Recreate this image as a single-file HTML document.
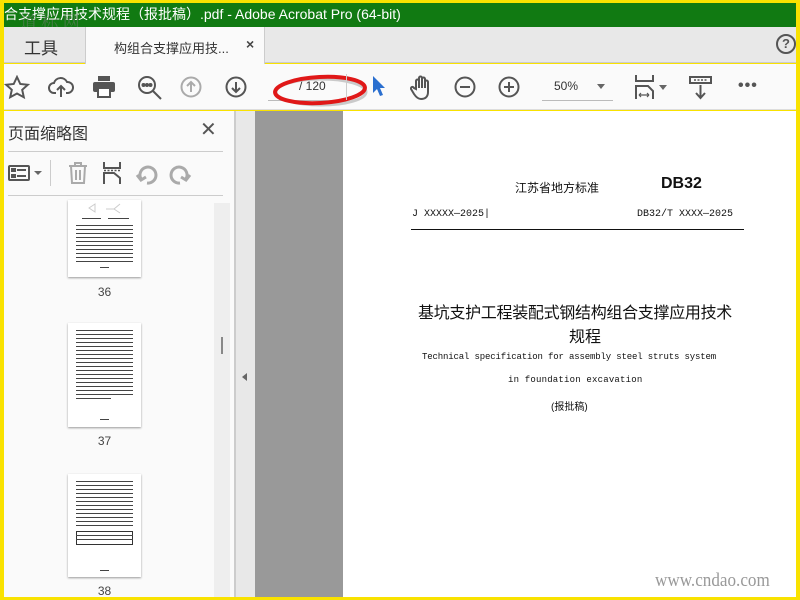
<!DOCTYPE html>
<html><head><meta charset="utf-8"><style>
*{margin:0;padding:0;box-sizing:border-box}
body{width:800px;height:600px;overflow:hidden;background:#f9e200;font-family:"Liberation Sans","Noto Sans CJK SC",sans-serif;position:relative}
.a{position:absolute}
.ic{position:absolute;stroke:#555;fill:none;stroke-width:2}
.thumb{position:absolute;left:68px;width:73px;background:#fff;box-shadow:0 1px 2px #999}
.ln{position:absolute;left:8px;right:8px;height:1px;background:#444}
.num{position:absolute;left:68px;width:73px;text-align:center;font-size:12px;color:#444}
</style></head><body>
<div class="a" style="left:4px;top:3px;width:792px;height:24px;background:#117a12;color:#fff;font-size:14px;line-height:22px;white-space:nowrap;overflow:hidden">合支撑应用技术规程（报批稿）.pdf - Adobe Acrobat Pro (64-bit)</div>
<div class="a" style="left:20px;top:8px;color:#5a7a5a;font-size:17px;font-family:'Noto Serif CJK SC',serif;opacity:.7">道 标 网</div>
<div class="a" style="left:4px;top:27px;width:792px;height:36px;background:#e8e8e8;border-bottom:1px solid #ccc"></div>
<div class="a" style="left:24px;top:34px;font-size:17px;color:#333">工具</div>
<div class="a" style="left:85px;top:27px;width:180px;height:37px;background:#fafafa;border-left:1px solid #ccc;border-right:1px solid #ccc"></div>
<div class="a" style="left:114px;top:38px;font-size:13px;color:#333">构组合支撑应用技...</div>
<div class="a" style="left:246px;top:36px;font-size:14px;color:#444;font-weight:bold">×</div>
<div class="a" style="left:776px;top:34px;width:20px;height:20px;border:2px solid #555;border-radius:50%;font-size:13px;font-weight:bold;text-align:center;line-height:16px;color:#555">?</div>
<div class="a" style="left:4px;top:64px;width:792px;height:46px;background:#fafafa;border-bottom:1px solid #ddd"></div>
<svg class="ic" style="left:4px;top:75px" width="26" height="26" viewBox="0 0 26 26"><path d="M13 2l3.3 7 7.5.8-5.6 5 1.6 7.4L13 18.5 6.2 22.2l1.6-7.4-5.6-5 7.5-.8z"/></svg>
<svg class="ic" style="left:48px;top:75px" width="26" height="24" viewBox="0 0 26 24"><path d="M8 18H6a5 5 0 0 1 0-10 7 7 0 0 1 13-1 5 5 0 0 1 1 11h-2M13 22V11M9 15l4-4 4 4"/></svg>
<svg style="position:absolute;left:92px;top:76px" width="24" height="22" viewBox="0 0 24 22"><rect x="6" y="0" width="12" height="5" fill="#555"/><rect x="1" y="6" width="22" height="10" rx="2" fill="#555"/><rect x="6" y="12" width="12" height="9" fill="#fff" stroke="#555" stroke-width="2"/></svg>
<svg class="ic" style="left:137px;top:75px" width="26" height="26" viewBox="0 0 26 26"><circle cx="10" cy="10" r="8"/><path d="M16 16l8 8"/><circle cx="6.5" cy="10" r="1" fill="#555"/><circle cx="10" cy="10" r="1" fill="#555"/><circle cx="13.5" cy="10" r="1" fill="#555"/></svg>
<svg class="ic" style="left:180px;top:76px;stroke:#aaa" width="22" height="22" viewBox="0 0 22 22"><circle cx="11" cy="11" r="9.5"/><path d="M11 16V6M7 10l4-4 4 4"/></svg>
<svg class="ic" style="left:225px;top:76px" width="22" height="22" viewBox="0 0 22 22"><circle cx="11" cy="11" r="9.5"/><path d="M11 6v10M7 12l4 4 4-4"/></svg>
<div class="a" style="left:268px;top:100px;width:80px;height:1px;background:#bbb"></div>
<div class="a" style="left:299px;top:79px;font-size:12px;color:#333">/ 120</div>
<svg class="a" style="left:270px;top:70px" width="100" height="44" viewBox="0 0 100 44"><ellipse cx="51" cy="22" rx="45" ry="13" fill="none" stroke="#999" stroke-width="3" opacity=".5"/><ellipse cx="50" cy="20" rx="45" ry="13" fill="none" stroke="#e01818" stroke-width="4" transform="rotate(-3 50 20)"/></svg>
<div class="a" style="left:346px;top:74px;width:1px;height:26px;background:#ccc"></div>
<svg class="a" style="left:372px;top:75px" width="14" height="22" viewBox="0 0 14 22"><path d="M1 1v17l4-4 3 7 3-1-3-7h5z" fill="#2a6fcf"/></svg>
<svg class="ic" style="left:410px;top:75px" width="24" height="26" viewBox="0 0 24 26"><path d="M6 14V6a1.5 1.5 0 0 1 3 0v7V3a1.5 1.5 0 0 1 3 0v10V4a1.5 1.5 0 0 1 3 0v9V7a1.5 1.5 0 0 1 3 0v10c0 5-3 7-7 7-3 0-5-2-7-5l-3-5a1.5 1.5 0 0 1 3-1z"/></svg>
<svg class="ic" style="left:454px;top:76px" width="22" height="22" viewBox="0 0 22 22"><circle cx="11" cy="11" r="9.5"/><path d="M6 11h10"/></svg>
<svg class="ic" style="left:498px;top:76px" width="22" height="22" viewBox="0 0 22 22"><circle cx="11" cy="11" r="9.5"/><path d="M6 11h10M11 6v10"/></svg>
<div class="a" style="left:554px;top:79px;font-size:12px;color:#333">50%</div>
<div class="a" style="left:597px;top:84px;border:4px solid transparent;border-top:5px solid #666"></div>
<div class="a" style="left:542px;top:100px;width:71px;height:1px;background:#bbb"></div>
<svg class="ic" style="left:634px;top:74px" width="24" height="26" viewBox="0 0 24 26"><path d="M2 1v6h17V1M2 25V12h12l5 5v8"/><path d="M5 21h10M5 21l2-2M5 21l2 2M15 21l-2-2M15 21l-2 2" stroke-width="1.2"/></svg>
<div class="a" style="left:659px;top:85px;border:4px solid transparent;border-top:5px solid #666"></div>
<svg class="ic" style="left:689px;top:76px" width="24" height="24" viewBox="0 0 24 24"><rect x="1" y="1" width="21" height="6"/><path d="M5 4h13" stroke-dasharray="2 1.5" stroke-width="1.5"/><path d="M11.5 9v13M7 17l4.5 5 4.5-5"/></svg>
<div class="a" style="left:738px;top:77px;font-size:16px;color:#555;letter-spacing:1px;font-weight:bold">•••</div>
<div class="a" style="left:4px;top:111px;width:232px;height:486px;background:#fafafa;border-right:2px solid #ccc"></div>
<div class="a" style="left:8px;top:120px;font-size:16px;color:#333">页面缩略图</div>
<div class="a" style="left:200px;top:117px;font-size:20px;color:#555">✕</div>
<div class="a" style="left:8px;top:151px;width:215px;height:1px;background:#ccc"></div>
<div class="a" style="left:8px;top:195px;width:215px;height:1px;background:#ccc"></div>
<svg class="ic" style="left:8px;top:165px" width="22" height="16" viewBox="0 0 22 16"><rect x="1" y="1" width="20" height="14" rx="1"/><rect x="4" y="4" width="3" height="2" fill="#555"/><rect x="4" y="10" width="3" height="2" fill="#555"/><path d="M9 5h9M9 11h9"/></svg>
<div class="a" style="left:34px;top:171px;border:4px solid transparent;border-top:4px solid #666"></div>
<div class="a" style="left:50px;top:160px;width:1px;height:26px;background:#ccc"></div>
<svg class="ic" style="left:68px;top:162px;stroke:#aaa" width="20" height="22" viewBox="0 0 20 22"><path d="M1 4h18M7 4V1h6v3M3 4l1 17h12l1-17M8 8v10M12 8v10"/></svg>
<svg class="ic" style="left:102px;top:162px" width="20" height="22" viewBox="0 0 20 22"><path d="M2 0v6h16V0M2 22V11h10l6 5v6"/><path d="M2 8.5h16" stroke-dasharray="2 1.5" stroke-width="1.5"/></svg>
<svg class="ic" style="left:135px;top:163px;stroke:#aaa;stroke-width:3" width="24" height="22" viewBox="0 0 24 22"><path d="M6 16a8 8 0 1 1 6 4"/><path d="M2 12l4 5 5-3"/></svg>
<svg class="ic" style="left:168px;top:163px;stroke:#aaa;stroke-width:3" width="24" height="22" viewBox="0 0 24 22"><path d="M18 16a8 8 0 1 0-6 4"/><path d="M22 12l-4 5-5-3"/></svg>
<div class="a" style="left:214px;top:203px;width:16px;height:394px;background:#eee"></div>
<div class="a" style="left:221px;top:337px;width:2px;height:17px;background:#888"></div>
<div class="thumb" style="top:200px;height:77px">
<svg class="a" style="left:18px;top:2px" width="40" height="14"><path d="M3 6l6-4v8zM20 7h8l6-5M28 7l6 4" stroke="#ccc" fill="none"/></svg>
<div class="ln" style="top:18px;left:14px;right:40px"></div><div class="ln" style="top:18px;left:40px;right:12px"></div><div class="ln" style="top:25px"></div><div class="ln" style="top:29px"></div><div class="ln" style="top:33px"></div><div class="ln" style="top:37px"></div><div class="ln" style="top:41px"></div><div class="ln" style="top:45px"></div><div class="ln" style="top:49px"></div><div class="ln" style="top:53px"></div><div class="ln" style="top:57px"></div><div class="ln" style="top:61px"></div><div class="ln" style="top:67px;left:32px;right:32px"></div></div>
<div class="num" style="top:285px">36</div>
<div class="thumb" style="top:323px;height:104px">
<div class="ln" style="top:7px"></div><div class="ln" style="top:11px"></div><div class="ln" style="top:15px"></div><div class="ln" style="top:19px"></div><div class="ln" style="top:23px"></div><div class="ln" style="top:27px"></div><div class="ln" style="top:31px"></div><div class="ln" style="top:35px"></div><div class="ln" style="top:39px"></div><div class="ln" style="top:43px"></div><div class="ln" style="top:47px"></div><div class="ln" style="top:51px"></div><div class="ln" style="top:55px"></div><div class="ln" style="top:59px"></div><div class="ln" style="top:63px"></div><div class="ln" style="top:67px"></div><div class="ln" style="top:71px"></div><div class="ln" style="top:75px;right:30px"></div><div class="ln" style="top:96px;left:32px;right:32px"></div></div>
<div class="num" style="top:434px">37</div>
<div class="thumb" style="top:474px;height:103px">
<div class="ln" style="top:7px"></div><div class="ln" style="top:11px"></div><div class="ln" style="top:15px"></div><div class="ln" style="top:19px"></div><div class="ln" style="top:23px"></div><div class="ln" style="top:27px"></div><div class="ln" style="top:31px"></div><div class="ln" style="top:35px"></div><div class="ln" style="top:39px"></div><div class="ln" style="top:43px"></div><div class="ln" style="top:47px"></div><div class="ln" style="top:51px"></div><div class="ln" style="top:57px;height:14px;background:none;border:1px solid #333"></div><div class="ln" style="top:61px"></div><div class="ln" style="top:65px"></div><div class="ln" style="top:96px;left:32px;right:32px"></div></div>
<div class="num" style="top:584px">38</div>
<div class="a" style="left:236px;top:111px;width:19px;height:486px;background:#e8e8e8"></div>
<div class="a" style="left:242px;top:373px;border:4px solid transparent;border-right:5px solid #666;border-left:0"></div>
<div class="a" style="left:255px;top:111px;width:88px;height:486px;background:#999"></div>
<div class="a" style="left:343px;top:111px;width:453px;height:486px;background:#fff"></div>
<div class="a" style="left:515px;top:179px;font-size:12px;color:#111">江苏省地方标准</div>
<div class="a" style="left:661px;top:175px;font-size:16px;color:#111;font-weight:bold">DB32</div>
<div class="a" style="left:412px;top:209px;font-size:10px;color:#111;font-family:'Liberation Mono',monospace">J XXXXX—2025|</div>
<div class="a" style="left:637px;top:209px;font-size:10px;color:#111;font-family:'Liberation Mono',monospace">DB32/T XXXX—2025</div>
<div class="a" style="left:411px;top:229px;width:333px;height:1px;background:#111"></div>
<div class="a" style="left:418px;top:299px;font-size:16px;color:#111;white-space:nowrap;letter-spacing:-.3px">基坑支护工程装配式钢结构组合支撑应用技术</div>
<div class="a" style="left:569px;top:323px;font-size:16px;color:#111">规程</div>
<div class="a" style="left:422px;top:352px;font-size:9px;color:#111;font-family:'Liberation Mono',monospace;white-space:nowrap;letter-spacing:-.15px">Technical specification for assembly steel struts system</div>
<div class="a" style="left:508px;top:375px;font-size:9px;color:#111;font-family:'Liberation Mono',monospace;letter-spacing:.2px">in foundation excavation</div>
<div class="a" style="left:551px;top:398px;font-size:10px;color:#111">(报批稿)</div>
<div class="a" style="left:655px;top:570px;font-size:19px;color:#999;font-family:'Liberation Serif',serif;transform:scaleX(.9);transform-origin:left">www.cndao.com</div>
</body></html>
